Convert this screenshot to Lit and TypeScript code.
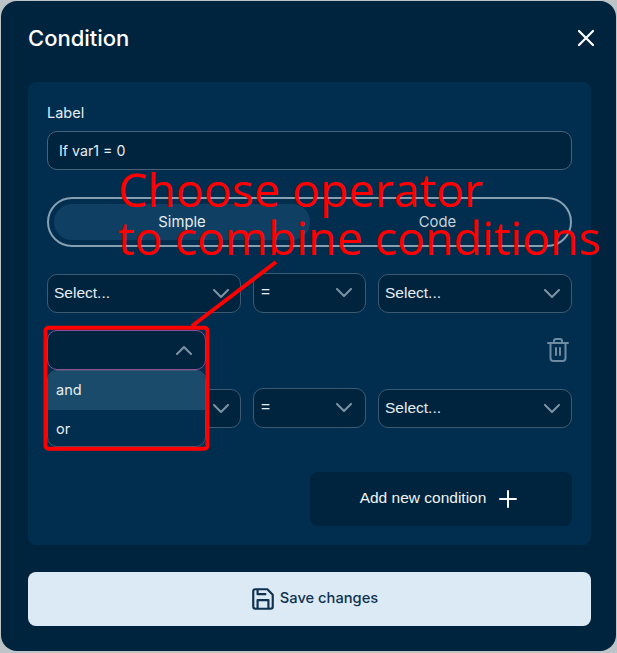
import { html, css, LitElement, svg } from 'lit';
import { customElement } from 'lit/decorators.js';

const chevron = (up = false) => html`
  <svg class="chev" viewBox="0 0 18 10" width="18" height="10">
    <path d=${up ? 'M2 9 L9 2 L16 9' : 'M2 1 L9 8 L16 1'} fill="none" stroke="currentColor" stroke-width="2" stroke-linecap="round" stroke-linejoin="round"></path>
  </svg>`;

@customElement('app-root')
export class AppRoot extends LitElement {
  static styles = [css`
    :host {
      display: block;
      position: relative;
      width: 617px;
      height: 653px;
      background: #bcc4c8;
      font-family: "Inter", "Liberation Sans", sans-serif;
      overflow: hidden;
    }

    * { box-sizing: border-box; }

    .dialog {
      margin: 1px 1px 0;
      height: 650px;
      border-radius: 16px;
      background: #00243d;
      padding: 0 25px 0 27px;
      display: flex;
      flex-direction: column;
    }

    .head {
      height: 81px;
      display: flex;
      align-items: center;
      justify-content: space-between;
      padding-bottom: 7px;
    }

    h1 {
      margin: 0;
      font-size: 22px;
      font-weight: 500;
      color: #fff;
    }

    .close { margin-right: -4px; display: block; }

    .panel {
      height: 463px;
      background: #012e4f;
      border-radius: 8px;
      padding: 22px 19px 0;
      display: flex;
      flex-direction: column;
    }

    .label {
      font-size: 14.5px;
      line-height: 17px;
      color: #e6edf2;
      margin-bottom: 10px;
    }

    .field {
      height: 39px;
      border: 1px solid #47637a;
      border-radius: 10px;
      background: #00243d;
      color: #e6edf2;
      font-size: 14.2px;
      display: flex;
      align-items: center;
      padding: 0 11px;
    }

    .toggle {
      height: 50px;
      margin-top: 27px;
      border: 2px solid #86a0b1;
      border-radius: 25px;
      padding: 5px;
      display: grid;
      grid-template-columns: 256px 1fr;
      font-size: 14.8px;
    }

    .toggle div {
      display: flex;
      align-items: center;
      justify-content: center;
      border-radius: 18px;
      color: #c8d3db;
    }

    .toggle .on {
      background: #0f4063;
      color: #e6edf2;
    }

    .row {
      display: grid;
      grid-template-columns: 194px 113px 194px;
      gap: 12px;
      align-items: end;
    }

    .row.first { margin-top: 26px; }
    .row.second { margin-top: 18px; }

    .select {
      height: 39px;
      border: 1px solid #3c5a72;
      border-radius: 10px;
      background: #00243d;
      color: #e6edf2;
      font-family: "Liberation Sans", sans-serif;
      font-size: 15.5px;
      display: flex;
      align-items: center;
      justify-content: space-between;
      padding: 0 10px 0 6px;
    }

    .select.mid {
      height: 40px;
      padding: 0 12px 0 7px;
    }

    .select span { padding-bottom: 2px; }

    .chev { color: #7d93a3; display: block; }

    .op-row {
      margin-top: 17px;
      height: 40px;
      display: flex;
      justify-content: space-between;
      align-items: center;
      position: relative;
    }

    .op {
      width: 159px;
      height: 40px;
      border: 1px solid #8a4f96;
      border-radius: 10px;
      background: #00243d;
      display: flex;
      align-items: center;
      justify-content: flex-end;
      padding: 0 12px;
    }

    .menu {
      position: absolute;
      left: 0;
      top: 40px;
      width: 159px;
      height: 77px;
      border: 1px solid #3c5a72;
      border-radius: 10px;
      background: #012e4f;
      overflow: hidden;
      z-index: 2;
      color: #e6edf2;
      font-size: 14.5px;
    }

    .menu div {
      height: 39px;
      display: flex;
      align-items: center;
      padding: 0 8px 2px;
    }

    .menu .hover { background: #1b4b6b; }

    .trash { display: block; margin-right: 3px; }

    .add {
      align-self: flex-end;
      margin-top: 44px;
      width: 262px;
      height: 54px;
      background: #00243d;
      border-radius: 8px;
      color: #f0f4f7;
      font-family: "Liberation Sans", sans-serif;
      font-size: 15.5px;
      display: flex;
      align-items: center;
      justify-content: center;
      gap: 13px;
      padding-right: 5px;
    }

    .add span { padding-bottom: 2px; }

    .save {
      margin-top: 27px;
      height: 54px;
      background: #dceaf6;
      border-radius: 8px;
      color: #0f3250;
      font-size: 14.7px;
      font-weight: 500;
      display: flex;
      align-items: center;
      justify-content: center;
      gap: 4px;
      padding-left: 9px;
    }

    .save span { padding-bottom: 2px; }

    .note {
      position: absolute;
      left: 118px;
      top: 165px;
      font-family: "Open Sans", sans-serif;
      font-size: 46.5px;
      line-height: 48px;
      color: #f00;
      white-space: nowrap;
      z-index: 3;
    }

    .marks {
      position: absolute;
      left: 0;
      top: 0;
      z-index: 3;
      pointer-events: none;
    }
  `];

  private selectBox(text: string, cls = '') {
    return html`<div class="select ${cls}"><span>${text}</span>${chevron()}</div>`;
  }

  private condition(cls: string) {
    return html`
      <div class="row ${cls}">
        ${this.selectBox('Select...')}
        ${this.selectBox('=', 'mid')}
        ${this.selectBox('Select...')}
      </div>`;
  }

  render() {
    return html`
      <div class="dialog">
        <div class="head">
          <h1>Condition</h1>
          <svg class="close" viewBox="0 0 18 18" width="18" height="18">
            <path d="M2 2 L16 16 M16 2 L2 16" stroke="#fff" stroke-width="2.2" stroke-linecap="round"></path>
          </svg>
        </div>
        <div class="panel">
          <div class="label">Label</div>
          <div class="field">If var1 = 0</div>
          <div class="toggle">
            <div class="on">Simple</div>
            <div>Code</div>
          </div>
          ${this.condition('first')}
          <div class="op-row">
            <div class="op">${chevron(true)}</div>
            <div class="menu">
              <div class="hover">and</div>
              <div>or</div>
            </div>
            <svg class="trash" viewBox="0 0 22 24" width="22" height="24" fill="none" stroke="#6f8ba0" stroke-width="2" stroke-linecap="round" stroke-linejoin="round">
              <path d="M1 5 H21 M7 5 V3 a2 2 0 0 1 2 -2 h4 a2 2 0 0 1 2 2 V5 M3.5 5 V20 a3 3 0 0 0 3 3 h9 a3 3 0 0 0 3 -3 V5 M9 10 V17 M13 10 V17"></path>
            </svg>
          </div>
          ${this.condition('second')}
          <div class="add">
            <span>Add new condition</span>
            <svg viewBox="0 0 18 18" width="18" height="18">
              <path d="M9 1 V17 M1 9 H17" stroke="#fff" stroke-width="2" stroke-linecap="round"></path>
            </svg>
          </div>
        </div>
        <div class="save">
          <svg viewBox="0 0 24 24" width="26" height="26" fill="none" stroke="#0f3250" stroke-width="2" stroke-linejoin="round">
            <path d="M3 5 a2 2 0 0 1 2 -2 H16 L21 8 V19 a2 2 0 0 1 -2 2 H5 a2 2 0 0 1 -2 -2 Z M7 21 V13 H17 V21 M7 3 V7.5 H15"></path>
          </svg>
          <span>Save changes</span>
        </div>
      </div>
      <div class="note">Choose operator<br>to combine conditions</div>
      <svg class="marks" width="617" height="653">
        ${svg`<path d="M276 262 L192 326" stroke="#f00" stroke-width="4"></path>
        <rect x="45.5" y="327.7" width="162" height="121" rx="3" fill="none" stroke="#f00" stroke-width="4"></rect>`}
      </svg>
    `;
  }
}
